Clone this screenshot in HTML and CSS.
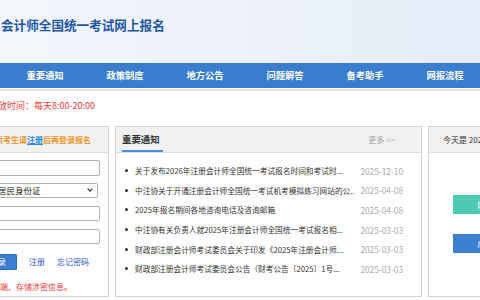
FILE: index.html
```html
<!DOCTYPE html>
<html lang="zh-CN">
<head>
<meta charset="utf-8">
<title>注册会计师全国统一考试网上报名</title>
<link rel="stylesheet" href="styles.css">
</head>
<body>
<header class="top">
  <h1 class="title">会计师全国统一考试网上报名</h1>
</header>
<nav class="nav">
  <a href="#">重要通知</a>
  <a href="#">政策制度</a>
  <a href="#">地方公告</a>
  <a href="#">问题解答</a>
  <a href="#">备考助手</a>
  <a href="#">网报流程</a>
</nav>
<div class="navline"></div>
<p class="hours">开放时间：每天8:00-20:00</p>
<main class="main">
  <section class="panel login">
    <div class="ph login-head">新考生请<a class="reg" href="#">注册</a>后再登录报名</div>
    <form class="login-body">
      <input class="field f1" type="text">
      <div class="selwrap">
        <select class="sel"><option>居民身份证</option></select>
      </div>
      <input class="field" type="text">
      <input class="field" type="password">
      <div class="actions">
        <button class="btn" type="button">登录</button>
        <a class="link" href="#">注册</a>
        <a class="link" href="#">忘记密码</a>
      </div>
      <p class="warn">严禁使用涉密终端、存储涉密信息。</p>
    </form>
  </section>
  <section class="panel news">
    <div class="ph news-head">
      <span class="tab">重要通知</span>
      <a class="more" href="#">更多 &gt;&gt;</a>
    </div>
    <ul class="list">
      <li><span class="t">关于发布2026年注册会计师全国统一考试报名时间和考试时...</span><span class="d">2025-12-10</span></li>
      <li><span class="t">中注协关于开通注册会计师全国统一考试机考模拟练习网站的公...</span><span class="d">2025-04-08</span></li>
      <li><span class="t">2025年报名期间各地咨询电话及咨询邮箱</span><span class="d">2025-04-08</span></li>
      <li><span class="t">中注协有关负责人就2025年注册会计师全国统一考试报名相...</span><span class="d">2025-03-03</span></li>
      <li><span class="t">财政部注册会计师考试委员会关于印发《2025年注册会计师...</span><span class="d">2025-03-03</span></li>
      <li><span class="t">财政部注册会计师考试委员会公告（财考公告〔2025〕1号...</span><span class="d">2025-03-03</span></li>
    </ul>
  </section>
  <section class="panel side">
    <div class="ph side-head">今天是 2025年12月10日 星期三</div>
    <div class="side-body">
      <a class="sbtn teal" href="#">网上报名入口</a>
      <a class="sbtn blue" href="#">成绩查询入口</a>
    </div>
  </section>
</main>
</body>
</html>
```
FILE: styles.css
```css
* { box-sizing: border-box; }
html, body { margin: 0; padding: 0; overflow: hidden; }
body {
  width: 480px;
  height: 300px;
  background: #fff;
  font-family: "Noto Sans CJK SC", "Noto Sans", sans-serif;
  color: #333;
}
a { text-decoration: none; }

.top {
  height: 63px;
  background: linear-gradient(90deg, #f4f7fc 0%, #edf2fa 40%, #e6edf8 100%);
  padding: 17px 0 0 1px;
}
.title {
  margin: 0;
  font-size: 12.6px;
  line-height: 16px;
  font-weight: bold;
  color: #1f57a4;
  white-space: nowrap;
}

.nav {
  height: 25px;
  background: #3a7dcf;
  display: flex;
  padding-left: 5px;
}
.nav a {
  flex: none;
  width: 80px;
  text-align: center;
  color: #fff;
  font-size: 9.3px;
  font-weight: bold;
  line-height: 25px;
}
.navline {
  height: 2px;
  margin-top: 1px;
  background: #e2e2e2;
}

.hours {
  margin: 8px 0 0 -11px;
  font-size: 9px;
  line-height: 14px;
  color: #f0393a;
  white-space: nowrap;
}

.main {
  display: flex;
  margin-top: 13px;
  height: 171px;
}
.panel {
  flex: none;
  height: 171px;
  border: 1px solid #d5d5d5;
  background: #fff;
}
.ph {
  height: 26px;
  background: #f1f1f1;
  border-bottom: 1px solid #dcdcdc;
  font-size: 8px;
  line-height: 25px;
  white-space: nowrap;
}

/* login */
.login { width: 231px; margin-left: -122px; }
.login-head {
  text-align: right;
  padding-right: 17px;
  color: #f5952a;
  font-weight: bold;
}
.reg { color: #2b8ae8; text-decoration: underline; }
.login-body {
  margin: 0;
  padding: 7px 8px 0 0;
  display: flex;
  flex-direction: column;
  align-items: flex-end;
}
.field {
  width: 200px;
  height: 15px;
  margin: 8px 0 0;
  border: 1px solid #b3b3b3;
  border-radius: 2px;
  padding: 0 3px;
  font-size: 8px;
  background: #fff;
}
.field.f1 { height: 16px; margin-top: 0; }
.selwrap {
  position: relative;
  margin: 7px 2px 0 0;
}
.sel {
  display: block;
  appearance: none;
  -webkit-appearance: none;
  width: 170px;
  height: 15px;
  border: 1px solid #b3b3b3;
  border-radius: 2px;
  background: #fff;
  padding: 0 0 0 69px;
  font-family: inherit;
  font-size: 8.5px;
  line-height: 13px;
  color: #222;
}
.selwrap::after {
  content: "";
  position: absolute;
  right: 6px;
  top: 4px;
  width: 3px;
  height: 3px;
  border-right: 1.5px solid #222;
  border-bottom: 1.5px solid #222;
  transform: rotate(45deg);
}
.actions {
  display: flex;
  align-items: center;
  gap: 12px;
  margin: 10px 11px 0 0;
}
.btn {
  width: 38px;
  height: 16px;
  border: 1px solid #2f6fc0;
  border-radius: 1px;
  background: #3b7ed1;
  color: #fff;
  font-family: inherit;
  font-size: 8px;
  padding: 0;
  line-height: 14px;
}
.link {
  color: #2f55d4;
  font-size: 8px;
  line-height: 12px;
}
.warn {
  margin: 12px 28px 0 0;
  font-size: 8px;
  line-height: 10px;
  color: #f23434;
  white-space: nowrap;
}

/* news */
.news { width: 307px; margin-left: 6px; }
.news-head {
  display: flex;
  justify-content: space-between;
  padding: 0 26px 0 6px;
}
.tab {
  height: 25px;
  padding-right: 3px;
  border-bottom: 2px solid #4a8fdc;
  font-size: 9.4px;
  font-weight: bold;
  color: #333;
  line-height: 25px;
}
.more { color: #a8a8a8; font-size: 8px; }
.list {
  list-style: none;
  margin: 0;
  padding: 8px 18px 0 9px;
}
.list li {
  display: flex;
  align-items: center;
  height: 19.6px;
  font-size: 7.7px;
}
.list li::before {
  content: "";
  flex: none;
  width: 3px;
  height: 3px;
  border-radius: 50%;
  background: #333;
  margin-right: 7px;
}
.t {
  flex: 1;
  min-width: 0;
  overflow: hidden;
  white-space: nowrap;
  color: #333;
}
.d {
  flex: none;
  margin-left: 6px;
  color: #ababab;
  font-size: 8.3px;
}

/* side */
.side { width: 200px; margin-left: 6px; }
.side-head { padding-left: 14px; color: #333; }
.side-body {
  padding: 42px 0 0 24px;
  display: flex;
  flex-direction: column;
  gap: 20px;
}
.sbtn {
  display: block;
  width: 100px;
  height: 19px;
  text-align: center;
  color: #fff;
  font-size: 8.5px;
  line-height: 19px;
}
.teal { background: #50c9b3; }
.blue { background: #3b7fd2; }
```
